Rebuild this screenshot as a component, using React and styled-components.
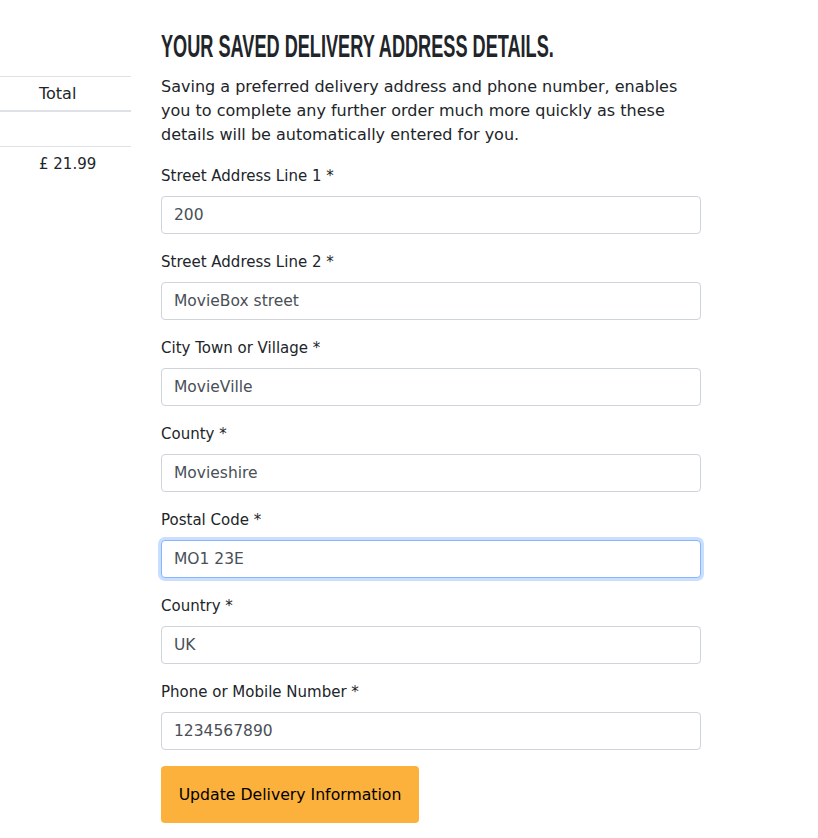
import React, { useState } from "react";
import styled, { createGlobalStyle } from "styled-components";

const GlobalStyle = createGlobalStyle`
	body {
		margin: 0;
		background: #ffffff;
		font-family: "DejaVu Sans", "Open Sans", sans-serif;
		color: #212529;
	}
`;

const fields = [
	{ label: "Street Address Line 1 *", value: "200" },
	{ label: "Street Address Line 2 *", value: "MovieBox street" },
	{ label: "City Town or Village *", value: "MovieVille" },
	{ label: "County *", value: "Movieshire" },
	{ label: "Postal Code *", value: "MO1 23E", focus: true },
	{ label: "Country *", value: "UK" },
	{ label: "Phone or Mobile Number *", value: "1234567890" },
];

const App = () => {
	const [values, setValues] = useState(fields.map((f) => f.value));

	return (
		<Page>
			<GlobalStyle />
			<SideCol>
				<Table>
					<thead>
						<tr>
							<HeadCell>Total</HeadCell>
						</tr>
					</thead>
					<tbody>
						<tr>
							<Cell>&nbsp;</Cell>
						</tr>
						<tr>
							<Cell $last>£ 21.99</Cell>
						</tr>
					</tbody>
				</Table>
			</SideCol>
			<MainCol>
				<Title>
					<TitleText>Your saved delivery address details.</TitleText>
				</Title>
				<Intro>
					Saving a preferred delivery address and phone number, enables
					you to complete any further order much more quickly as these
					details will be automatically entered for you.
				</Intro>
				{fields.map((f, i) => (
					<Group key={f.label}>
						<Label>{f.label}</Label>
						<Input
							$focus={f.focus}
							value={values[i]}
							onChange={(e) => {
								const next = [...values];
								next[i] = e.target.value;
								setValues(next);
							}}
						/>
					</Group>
				))}
				<SubmitButton>Update Delivery Information</SubmitButton>
			</MainCol>
		</Page>
	);
};

export default App;

const Page = styled.div`
	display: flex;
	gap: 30px;
	padding-top: 28px;
	min-height: 838px;
	box-sizing: border-box;
	overflow: hidden;
`;

const SideCol = styled.div`
	width: 131px;
	padding-top: 48px;
	flex-shrink: 0;
`;

const Table = styled.table`
	width: 100%;
	border-collapse: collapse;
	font-size: 15px;
	color: #212529;
`;

const HeadCell = styled.th`
	text-align: left;
	font-weight: 400;
	font-size: 16px;
	padding: 6px 0 6px 39px;
	height: 21px;
	border-top: 1px solid #dee2e6;
	border-bottom: 2px solid #dee2e6;
`;

const Cell = styled.td`
	padding: 6px 0 6px 39px;
	height: 22px;
	border-bottom: ${(p) => (p.$last ? "none" : "1px solid #dee2e6")};
`;

const MainCol = styled.div`
	width: 540px;
	display: flex;
	flex-direction: column;
`;

const Title = styled.h2`
	margin: 0;
	height: 36px;
	font-family: "Liberation Sans", "Arial", sans-serif;
	font-weight: 700;
	font-size: 32px;
	line-height: 36px;
	text-transform: uppercase;
	color: #212529;
	white-space: nowrap;
`;

/* condensed display face stand-in */
const TitleText = styled.span`
	display: inline-block;
	transform: scaleX(0.567);
	transform-origin: left center;
`;

const Intro = styled.p`
	margin: 11px 0 17px;
	font-size: 16px;
	line-height: 24px;
`;

const Group = styled.div`
	display: flex;
	flex-direction: column;
	margin-bottom: 16px;
`;

const Label = styled.label`
	font-size: 15px;
	line-height: 24px;
	margin-bottom: 8px;
`;

const Input = styled.input`
	height: 38px;
	box-sizing: border-box;
	padding: 6px 12px;
	font-family: inherit;
	font-size: 15.5px;
	color: #495057;
	border: 1px solid ${(p) => (p.$focus ? "#86b7fe" : "#ced4da")};
	border-radius: 4px;
	outline: none;
	box-shadow: ${(p) => (p.$focus ? "0 0 0 3px rgba(13, 110, 253, 0.22)" : "none")};
`;

const SubmitButton = styled.button`
	align-self: flex-start;
	width: 258px;
	height: 57px;
	background: #fbb13c;
	border: none;
	border-radius: 4px;
	font-family: inherit;
	font-size: 15.7px;
	color: #000;
	cursor: pointer;
`;
